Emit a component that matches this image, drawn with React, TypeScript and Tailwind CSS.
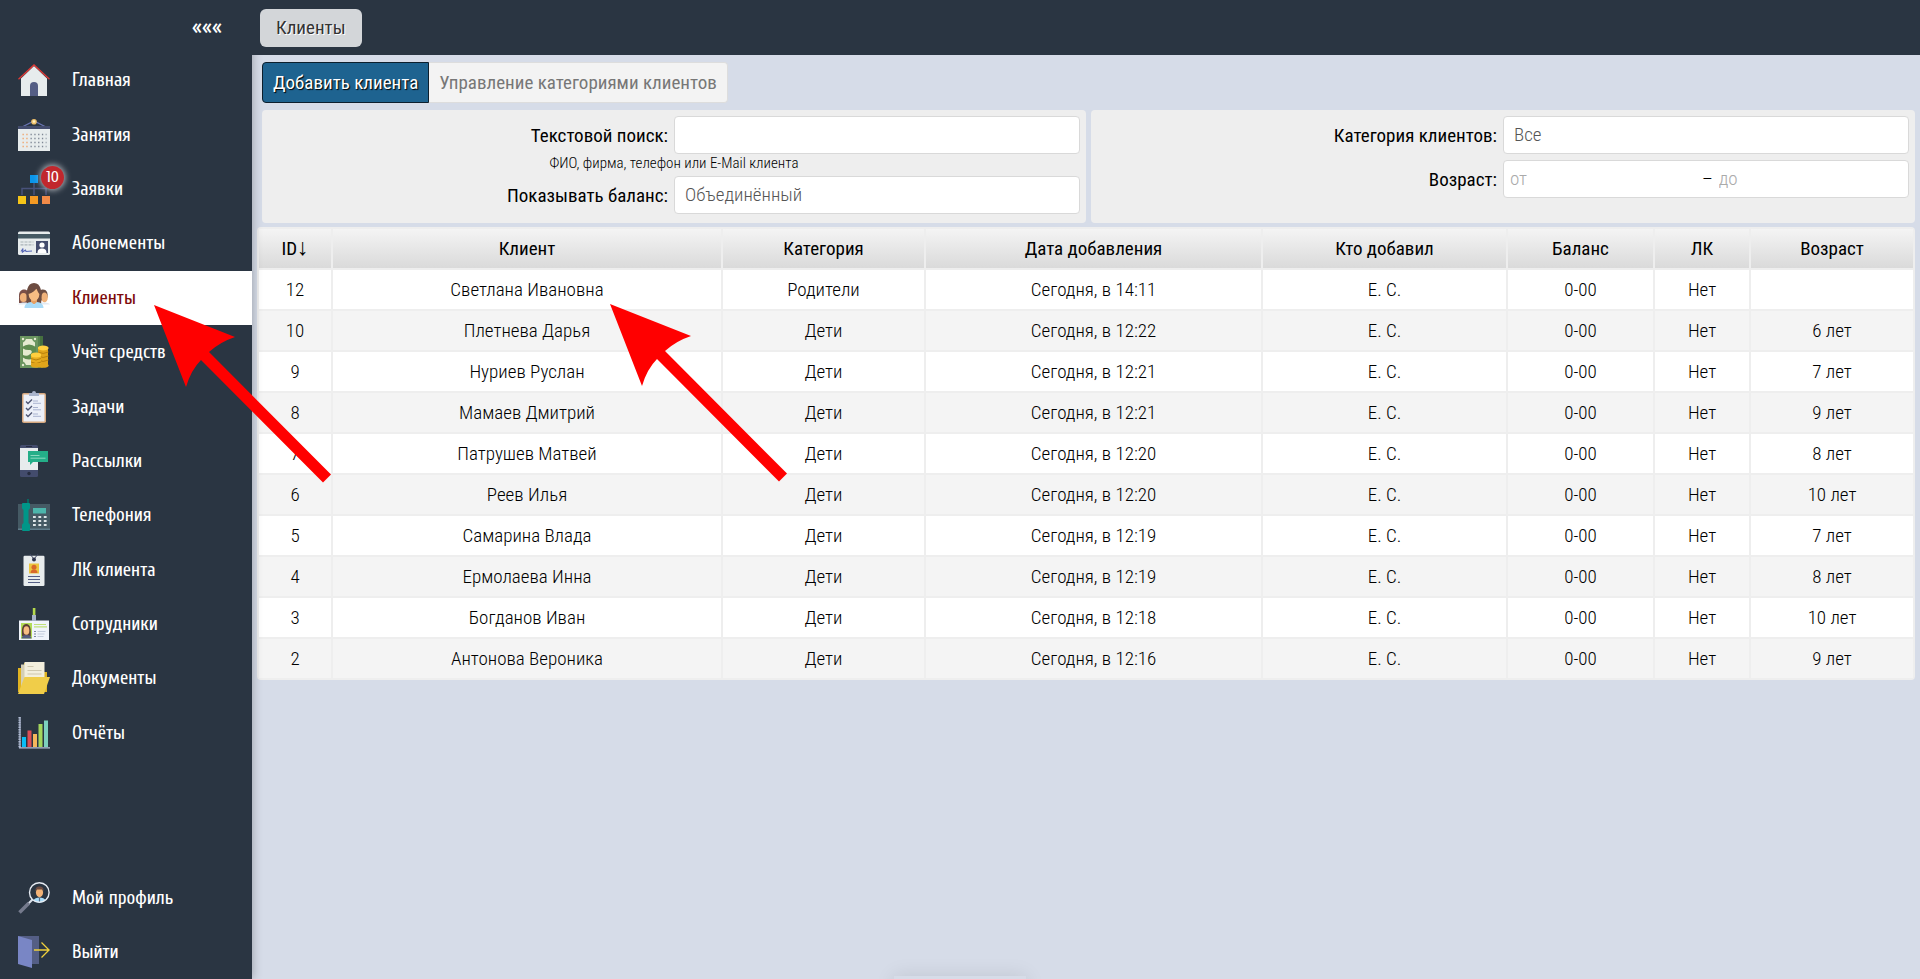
import type { ReactNode } from "react";

type MenuItem = {
  name: string;
  icon: ReactNode;
  badge?: number;
  active?: boolean;
};

const Icon = ({ children }: { children: ReactNode }) => (
  <svg viewBox="0 0 32 32" width="32" height="32" className="shrink-0" aria-hidden="true">
    {children}
  </svg>
);

const HomeIcon = () => (
  <Icon>
    <path d="M3 32V14.5L16 2l13 12.5V32z" fill="#e7eced" />
    <path d="M.5 15.300L16 1l15.500 14.300" fill="none" stroke="#e03a36" strokeWidth="1.300" />
    <path d="M12 32V22a4 4 0 0 1 8 0v10z" fill="#545e85" />
  </Icon>
);

const CalendarIcon = () => (
  <Icon>
    <path d="M5 7.500L16 2l11 5.500" fill="none" stroke="#6a75b5" strokeWidth="1.300" />
    <circle cx="16" cy="2.800" r="2.800" fill="#efc06a" />
    <circle cx="16" cy="2.500" r="1.300" fill="#fff0c2" />
    <path d="M0 7h32v4H0z" fill="#434c6d" />
    <path d="M0 10h32v22H0z" fill="#e7eced" />
    <path d="M12.500 15.500h16M12.500 19.500h16M12.500 23.500h16M12.500 27.500h16" stroke="#7f8795" strokeWidth="1.300" strokeDasharray="1.300 2.500" />
    <path d="M4.500 15.500h6M4.500 19.500h6M4.500 23.500h6M4.500 27.500h6" stroke="#f0a36b" strokeWidth="1.300" strokeDasharray="1.300 2.500" />
  </Icon>
);

const TreeIcon = () => (
  <Icon>
    <path d="M16 9v13M4 22v-6.500h24V22" fill="none" stroke="#48527a" strokeWidth="1.500" />
    <path d="M12 2h8v8h-8z" fill="#0a95ea" />
    <path d="M0 23h8v8H0z" fill="#f5c518" />
    <path d="M12 23h8v8h-8z" fill="#f59a23" />
    <path d="M24 23h8v8h-8z" fill="#f28b48" />
  </Icon>
);

const CardIcon = () => (
  <Icon>
    <rect y="4.500" width="32" height="23.500" rx="1.500" fill="#e7eced" />
    <path d="M0 7h32v4.500H0z" fill="#455a64" />
    <path d="M2.500 15h13M2.500 17.800h13" stroke="#aab3b8" strokeWidth="1.200" strokeDasharray="3 1" />
    <path d="M3 24.500l2-3-.5 3.500 3-2 .5 1.500 6-.5" fill="none" stroke="#5566b5" strokeWidth="1.100" />
    <path d="M18 14h12v12H18z" fill="#434c6d" />
    <circle cx="24" cy="18" r="2.600" fill="#fff" />
    <path d="M19.500 26c0-3.500 2-4.500 4.500-4.500s4.500 1 4.500 4.500z" fill="#fff" />
  </Icon>
);

const ClientsIcon = () => (
  <Icon>
    <path d="M1 21V13.500C1 10 3 7.500 6 7.500S12 10 12 14v8z" fill="#7a4f48" />
    <ellipse cx="5.500" cy="15.500" rx="3.600" ry="4.500" fill="#f0b27a" />
    <path d="M20 20v-6c0-4 2-6.500 5-6.500 3.500 0 5.200 3 4.500 8z" fill="#6d4c41" />
    <ellipse cx="26.500" cy="15.500" rx="3.300" ry="5" fill="#f0b27a" />
    <path d="M0 22.500c1-2 8-2.500 10-1.500h12c3-1 9-.5 10 1.500z" fill="#e3eaf2" />
    <path d="M9 22C7.500 10 9 1 16 1s8.500 9 7 21z" fill="#6d4c41" />
    <path d="M13 16h6v6h-6z" fill="#e59f63" />
    <ellipse cx="16" cy="12.500" rx="5.300" ry="6.500" fill="#f7bd83" />
    <path d="M10.500 12c4-1 6-3 8-5.500 1 3 2 4.500 3 5.500 0-6-2-8.500-5.500-8.500S10.500 6 10.500 12z" fill="#6d4c41" />
    <path d="M6.500 26c0-4 3-5.500 6.500-6l3 2.500 3-2.500c3.500.5 6.500 2 6.500 6z" fill="#a9dbf8" />
  </Icon>
);

const MoneyIcon = () => (
  <Icon>
    <path d="M2 0h23v32H2z" fill="#46703f" />
    <path d="M2 0h20v32H2z" fill="#568250" />
    <path d="M2 0h18v32H2z" fill="#6b9560" />
    <path d="M8 3h6q1 3 3 3.500v19q-2 .5-3 3.500H8q-1-3-3-3.500v-19q2-.5 3-3.500z" fill="#e5ead0" />
    <circle cx="5" cy="3" r="1.200" fill="#e5ead0" />
    <circle cx="17" cy="3" r="1.200" fill="#e5ead0" />
    <circle cx="5" cy="29" r="1.200" fill="#e5ead0" />
    <path d="M4 11q7-5 14 0v10q-7 5-14 0z" fill="#5f8c4f" />
    <path d="M5 12.500q3 2 7 1.500 3 1 1 3.500l-3 2q-3 .500-5-.5z" fill="#e5ead0" />
    <path d="M20 12h10v18H20z" fill="#e0a51b" />
    <path d="M20 16q5 3 10.500 0M20 20q5 3 10.500 0M20 24q5 3 10.500 0" fill="none" stroke="#b9820d" strokeWidth="1" />
    <ellipse cx="25.200" cy="12" rx="5.400" ry="2.600" fill="#ffcf3f" />
    <ellipse cx="25.200" cy="29.500" rx="5.400" ry="2.300" fill="#e0a51b" />
    <path d="M13 19h10v10H13z" fill="#e8ae20" />
    <path d="M13 22.500q5 3 10 0M13 26q5 3 10 0" fill="none" stroke="#b9820d" strokeWidth="1" />
    <ellipse cx="18" cy="19" rx="5.200" ry="2.500" fill="#ffcf3f" />
    <ellipse cx="18" cy="29.300" rx="5.200" ry="2.500" fill="#e0a51b" />
  </Icon>
);

const TasksIcon = () => (
  <Icon>
    <rect x="4" y="2" width="24" height="30" rx="1.800" fill="#d5a77e" />
    <path d="M5.500 3.500h21v27h-21z" fill="#ecf0f9" />
    <path d="M11 2h3a2 2 0 0 1 4 0h3v3H11z" fill="#a9b4cc" />
    <path d="M8 10.500l2 2 4-4M8 17l2 2 4-4M8 23.500l2 2 4-4" fill="none" stroke="#4f5673" strokeWidth="1.400" />
    <path d="M15 10h5M15 12.300h8M15 16.500h5M15 18.800h8M15 23h5M15 25.300h8" stroke="#aab3d0" strokeWidth="1" />
  </Icon>
);

const MailingIcon = () => (
  <Icon>
    <rect x="2" width="18" height="32" rx="1.500" fill="#434c6d" />
    <path d="M2 3h18v22H2z" fill="#e7eced" />
    <path d="M8 1.500h6" stroke="#252b3f" strokeWidth="1" />
    <circle cx="11" cy="28.500" r="1.700" fill="#252b3f" />
    <path d="M10 6h20v11H15l-3 3v-3h-2z" fill="#24ae88" />
    <path d="M12.500 10.500h9M12.500 13.200h15" stroke="#8bd8bf" strokeWidth="1" />
  </Icon>
);

const PhoneIcon = () => (
  <Icon>
    <path d="M0 5h32v26H0z" fill="#455a64" />
    <path d="M0 29.500h32V31H0z" fill="#607d8b" />
    <path d="M10 0v6" stroke="#00796b" strokeWidth="1.500" />
    <path d="M15 9h13v5.500H15z" fill="#4db6ac" />
    <path d="M15 18h14M15 22h14M15 26h14" stroke="#dfe6e8" strokeWidth="2" strokeDasharray="2.800 2.600" />
    <path d="M5 4h6q1 0 1 1v4q0 1-1.500 2v13q1.500 1 1.500 2v5q0 1-1 1H5q-1 0-1-1v-5q0-1 1.500-2V11Q4 10 4 9V5q0-1 1-1z" fill="#009688" />
  </Icon>
);

const BadgeIcon = () => (
  <Icon>
    <rect x="5.500" y="1.800" width="21" height="30.200" rx="1.200" fill="#e7eced" />
    <path d="M12 0l3.500 4.500M20 0l-3.500 4.500" stroke="#3e4663" strokeWidth="1" />
    <circle cx="16" cy="5.500" r="2" fill="#2f364f" />
    <path d="M11 9.500h10v10H11z" fill="#ecc63f" />
    <circle cx="16" cy="13.200" r="2.500" fill="#d8682b" />
    <path d="M12.500 19c0-2.500 1.500-3.500 3.500-3.500s3.500 1 3.500 3.500z" fill="#d8682b" />
    <path d="M10 22.500h12M10 25.500h12M10 28.500h12" stroke="#545e85" strokeWidth="1.200" />
  </Icon>
);

const StaffIcon = () => (
  <Icon>
    <path d="M14.800 0h2.600v7h-2.600z" fill="#b5d94c" />
    <path d="M1 12.500h30V32H1z" fill="#f0f4fb" />
    <path d="M14 7h4v6h-4z" fill="#a7b3c9" />
    <path d="M3 15h11v15.500H3z" fill="#b3dd58" />
    <path d="M4 28c-.5-7 0-12 4.300-12S13 21 12.800 28z" fill="#5d4037" />
    <ellipse cx="8.400" cy="22.500" rx="2.900" ry="4.300" fill="#f7bd83" />
    <path d="M3.500 30.500c0-2.500 2-3.500 5-3.500s5 1 5 3.500z" fill="#555c80" />
    <path d="M16 16.500h12M16 18.800h13" stroke="#c0e07a" strokeWidth="1.200" />
    <path d="M16 23.500h2M16 26h2M16 28.500h2" stroke="#7b869f" strokeWidth="1.200" />
    <path d="M19.500 23.500h8M19.500 26h7M19.500 28.500h6" stroke="#c4cddd" strokeWidth="1" />
  </Icon>
);

const FolderIcon = () => (
  <Icon>
    <path d="M0 6h3v-3h3V1h20v9h3v20H0z" fill="#e0b321" />
    <path d="M3 2.500h5V24H3z" fill="#d5cfb5" />
    <path d="M6.500 0h20v22h-20z" fill="#f3efdd" />
    <path d="M9.500 4.500h6M9.500 8.500h14M9.500 12h14" stroke="#cfc8ae" strokeWidth="1.200" />
    <path d="M6.500 15H32l-6 17H0z" fill="#f0cd49" />
  </Icon>
);

const ReportsIcon = () => (
  <Icon>
    <path d="M1.500 0v31" stroke="#a9b4cc" strokeWidth="2.200" strokeDasharray="1.400 1" />
    <path d="M2 0v31M1 30.800h31" stroke="#b4bfd6" strokeWidth="1.200" />
    <path d="M4 20h4v10H4z" fill="#08bdf5" />
    <path d="M9.500 13.500h4V30h-4z" fill="#dc4d55" />
    <path d="M15 17h4v13h-4z" fill="#f6b65c" />
    <path d="M20.500 7h4v23h-4z" fill="#a3d65c" />
    <path d="M26 3.500h4V30h-4z" fill="#7dd0bd" />
  </Icon>
);

const ProfileIcon = () => (
  <Icon>
    <path d="M14.500 17.500l-5 5" stroke="#d9dfe8" strokeWidth="2.200" />
    <path d="M11 21L1.500 30.500" stroke="#757a8c" strokeWidth="3.600" />
    <path d="M15.500 18.500c1-4 11-4 12 0a10 10 0 0 1-12 0z" fill="#a9dbf8" />
    <ellipse cx="21.500" cy="10.500" rx="3.600" ry="4.700" fill="#f3b377" />
    <path d="M17.500 9.500c-.3-4 1.500-5 4-5s4.500 1 4 5l-1-2h-6z" fill="#6d4c41" />
    <path d="M21.500 16v4" stroke="#546e8a" strokeWidth="1.200" />
    <circle cx="21.300" cy="10.500" r="9.800" fill="none" stroke="#e6ebf2" strokeWidth="1.400" />
  </Icon>
);

const ExitIcon = () => (
  <Icon>
    <path d="M0 0h21v28H0z" fill="#545e85" />
    <path d="M0 0l14 4v28L0 28z" fill="#7986c5" />
    <path d="M16 14h15.500M23.500 6.500l7.500 7.500-7.500 7.500" fill="none" stroke="#f0d03c" strokeWidth="1.300" />
  </Icon>
);

const menu: MenuItem[] = [
  { name: "Главная", icon: <HomeIcon /> },
  { name: "Занятия", icon: <CalendarIcon /> },
  { name: "Заявки", icon: <TreeIcon />, badge: 10 },
  { name: "Абонементы", icon: <CardIcon /> },
  { name: "Клиенты", icon: <ClientsIcon />, active: true },
  { name: "Учёт средств", icon: <MoneyIcon /> },
  { name: "Задачи", icon: <TasksIcon /> },
  { name: "Рассылки", icon: <MailingIcon /> },
  { name: "Телефония", icon: <PhoneIcon /> },
  { name: "ЛК клиента", icon: <BadgeIcon /> },
  { name: "Сотрудники", icon: <StaffIcon /> },
  { name: "Документы", icon: <FolderIcon /> },
  { name: "Отчёты", icon: <ReportsIcon /> },
];

const userMenu: MenuItem[] = [
  { name: "Мой профиль", icon: <ProfileIcon /> },
  { name: "Выйти", icon: <ExitIcon /> },
];

const clients = [
  { id: 12, name: "Светлана Ивановна", category: "Родители", time: "14:11", age: "" },
  { id: 10, name: "Плетнева Дарья", category: "Дети", time: "12:22", age: "6 лет" },
  { id: 9, name: "Нуриев Руслан", category: "Дети", time: "12:21", age: "7 лет" },
  { id: 8, name: "Мамаев Дмитрий", category: "Дети", time: "12:21", age: "9 лет" },
  { id: 7, name: "Патрушев Матвей", category: "Дети", time: "12:20", age: "8 лет" },
  { id: 6, name: "Реев Илья", category: "Дети", time: "12:20", age: "10 лет" },
  { id: 5, name: "Самарина Влада", category: "Дети", time: "12:19", age: "7 лет" },
  { id: 4, name: "Ермолаева Инна", category: "Дети", time: "12:19", age: "8 лет" },
  { id: 3, name: "Богданов Иван", category: "Дети", time: "12:18", age: "10 лет" },
  { id: 2, name: "Антонова Вероника", category: "Дети", time: "12:16", age: "9 лет" },
];

const columns = [
  { title: "ID", width: "w-[72px]", sorted: true },
  { title: "Клиент", width: "w-[388px]" },
  { title: "Категория", width: "w-[201px]" },
  { title: "Дата добавления", width: "w-[335px]" },
  { title: "Кто добавил", width: "w-[243px]" },
  { title: "Баланс", width: "w-[145px]" },
  { title: "ЛК", width: "w-[94px]" },
  { title: "Возраст", width: "w-[162px]" },
];

const fieldClass =
  "h-[38px] w-full appearance-none rounded-[4px] border border-[#d9d9d9] bg-white px-[10px] font-light text-[#555] outline-none";

const MenuLink = ({ item }: { item: MenuItem }) => (
  <a
    href="#"
    className={
      item.active
        ? "flex min-h-[54px] flex-1 items-center gap-[22px] bg-white pl-[18px] text-[#7d0a0a]"
        : "flex min-h-[54px] flex-1 items-center gap-[22px] pl-[18px] text-white"
    }
  >
    <span className="relative">
      {item.icon}
      {item.badge && (
        <span className="absolute -top-[7px] left-[23px] flex h-[23px] w-[23px] items-center justify-center rounded-full bg-[#c1272d] text-base text-white shadow-[0_0_6px_1px_rgba(255,255,255,0.7)]">
          {item.badge}
        </span>
      )}
    </span>
    <span>{item.name}</span>
  </a>
);

const Sidebar = () => (
  <aside className="z-10 flex w-[252px] shrink-0 flex-col bg-[#2a3542] text-[19px] font-normal shadow-[0_0_10px_rgba(0,0,0,0.3)] [font-family:Cuprum,'Roboto_Condensed',Roboto,sans-serif]">
    <div className="flex h-[53px] items-center justify-end pr-[30px]">
      <button type="button" aria-label="Свернуть меню" className="text-[23px] leading-none text-white">
        «««
      </button>
    </div>
    <nav className="flex min-h-[707px] flex-col">
      {menu.map((item) => (
        <MenuLink key={item.name} item={item} />
      ))}
    </nav>
    <nav className="mt-auto flex flex-col">
      {userMenu.map((item) => (
        <MenuLink key={item.name} item={item} />
      ))}
    </nav>
  </aside>
);

const Filters = () => (
  <form className="ml-[5px] flex gap-[5px]">
    <div className="flex-1 rounded-[4px] bg-[#eee] px-[6px] pt-[6px] pb-[9px]">
      <div className="flex items-center">
        <label htmlFor="search" className="w-1/2 pt-[2px] pr-[6px] text-right">
          Текстовой поиск:
        </label>
        <div className="w-1/2">
          <input id="search" type="text" className={fieldClass} />
        </div>
      </div>
      <p className="h-[22px] pt-px text-center text-[15px] leading-4 font-light">ФИО, фирма, телефон или E-Mail клиента</p>
      <div className="flex items-center">
        <label htmlFor="balance" className="w-1/2 pt-[2px] pr-[6px] text-right">
          Показывать баланс:
        </label>
        <div className="w-1/2">
          <select id="balance" className={fieldClass}>
            <option>Объединённый</option>
          </select>
        </div>
      </div>
    </div>
    <div className="flex flex-1 flex-col gap-[6px] rounded-[4px] bg-[#eee] p-[6px]">
      <div className="flex items-center">
        <label htmlFor="category" className="w-1/2 pt-[2px] pr-[6px] text-right">
          Категория клиентов:
        </label>
        <div className="w-1/2">
          <select id="category" className={fieldClass}>
            <option>Все</option>
          </select>
        </div>
      </div>
      <div className="flex items-center">
        <label htmlFor="age-from" className="w-1/2 pt-[2px] pr-[6px] text-right">
          Возраст:
        </label>
        <div className="flex h-[38px] w-1/2 items-center rounded-[4px] border border-[#d9d9d9] bg-white font-light">
          <input
            id="age-from"
            type="text"
            placeholder="от"
            className="w-[48%] min-w-0 px-[6px] outline-none placeholder:text-[#aaa]"
          />
          <span className="px-1">–</span>
          <input
            type="text"
            aria-label="Возраст до"
            placeholder="до"
            className="min-w-0 flex-1 px-[2px] outline-none placeholder:text-[#aaa]"
          />
        </div>
      </div>
    </div>
  </form>
);

const ClientsTable = () => (
  <table className="mt-1 w-full table-fixed border-separate border-spacing-[2px] rounded-[4px] bg-[#eee] text-center">
    <colgroup>
      {columns.map((col) => (
        <col key={col.title} className={col.width} />
      ))}
    </colgroup>
    <thead>
      <tr>
        {columns.map((col) => (
          <th key={col.title} className="h-[39px] bg-linear-to-b from-[#f4f4f4] to-[#dadada] font-normal">
            {col.title}
            {col.sorted && <span className="text-[23px] leading-none [font-family:'Liberation_Serif',serif]">↓</span>}
          </th>
        ))}
      </tr>
    </thead>
    <tbody className="font-light">
      {clients.map((client) => (
        <tr key={client.id} className="h-[39px] bg-white even:bg-[#f4f4f4]">
          <td>{client.id}</td>
          <td>{client.name}</td>
          <td>{client.category}</td>
          <td>Сегодня, в {client.time}</td>
          <td>Е. С.</td>
          <td>0-00</td>
          <td>Нет</td>
          <td>{client.age}</td>
        </tr>
      ))}
    </tbody>
  </table>
);

const Arrow = ({ className }: { className: string }) => (
  <svg viewBox="0 0 178 178" width="178" height="178" className={className} aria-hidden="true">
    <path d="M0 0L81 32Q66 37 55 47L177 169.500L169 177.500L47 55Q37 65 32 82Z" fill="#f00" />
  </svg>
);

const App = () => {
  return (
    <div className="relative flex min-h-screen overflow-hidden bg-[#d6dce8] text-[19px] leading-6 text-black [font-family:'Roboto_Condensed',Roboto,sans-serif]">
      <Sidebar />

      <div className="flex min-w-0 flex-1 flex-col">
        <header className="z-20 flex h-[55px] items-center bg-[#2a3542] pl-2">
          <button
            type="button"
            className="flex h-[38px] items-center rounded-[6px] bg-[#d3d6d9] px-4 text-[#333] [text-shadow:1px_1px_0_#fff]"
          >
            Клиенты
          </button>
        </header>

        <main className="pt-[7px] pr-[5px] pl-[5px]">
          <div className="mb-[7px] ml-[5px] flex h-[41px]">
            <button
              type="button"
              className="rounded-l-[4px] border border-[#0c1f2d] bg-[#1e6390] px-[10px] text-white [text-shadow:1px_1px_1px_#000]"
            >
              Добавить клиента
            </button>
            <button type="button" className="rounded-r-[4px] border border-l-0 border-[#ddd] bg-[#f3f3f3] px-[10px] text-[#777]">
              Управление категориями клиентов
            </button>
          </div>
          <Filters />
          <ClientsTable />
        </main>
      </div>

      {/* notification tray, hidden below the window edge */}
      <div className="absolute -bottom-[37px] left-1/2 h-10 w-[132px] -translate-x-1/2 bg-[#d6dce8] shadow-[0_0_20px_rgba(0,0,0,0.1)]" />

      <Arrow className="pointer-events-none absolute top-[305px] left-[154px] z-30" />
      <Arrow className="pointer-events-none absolute top-[304px] left-[610px] z-30" />
    </div>
  );
};

export default App;
